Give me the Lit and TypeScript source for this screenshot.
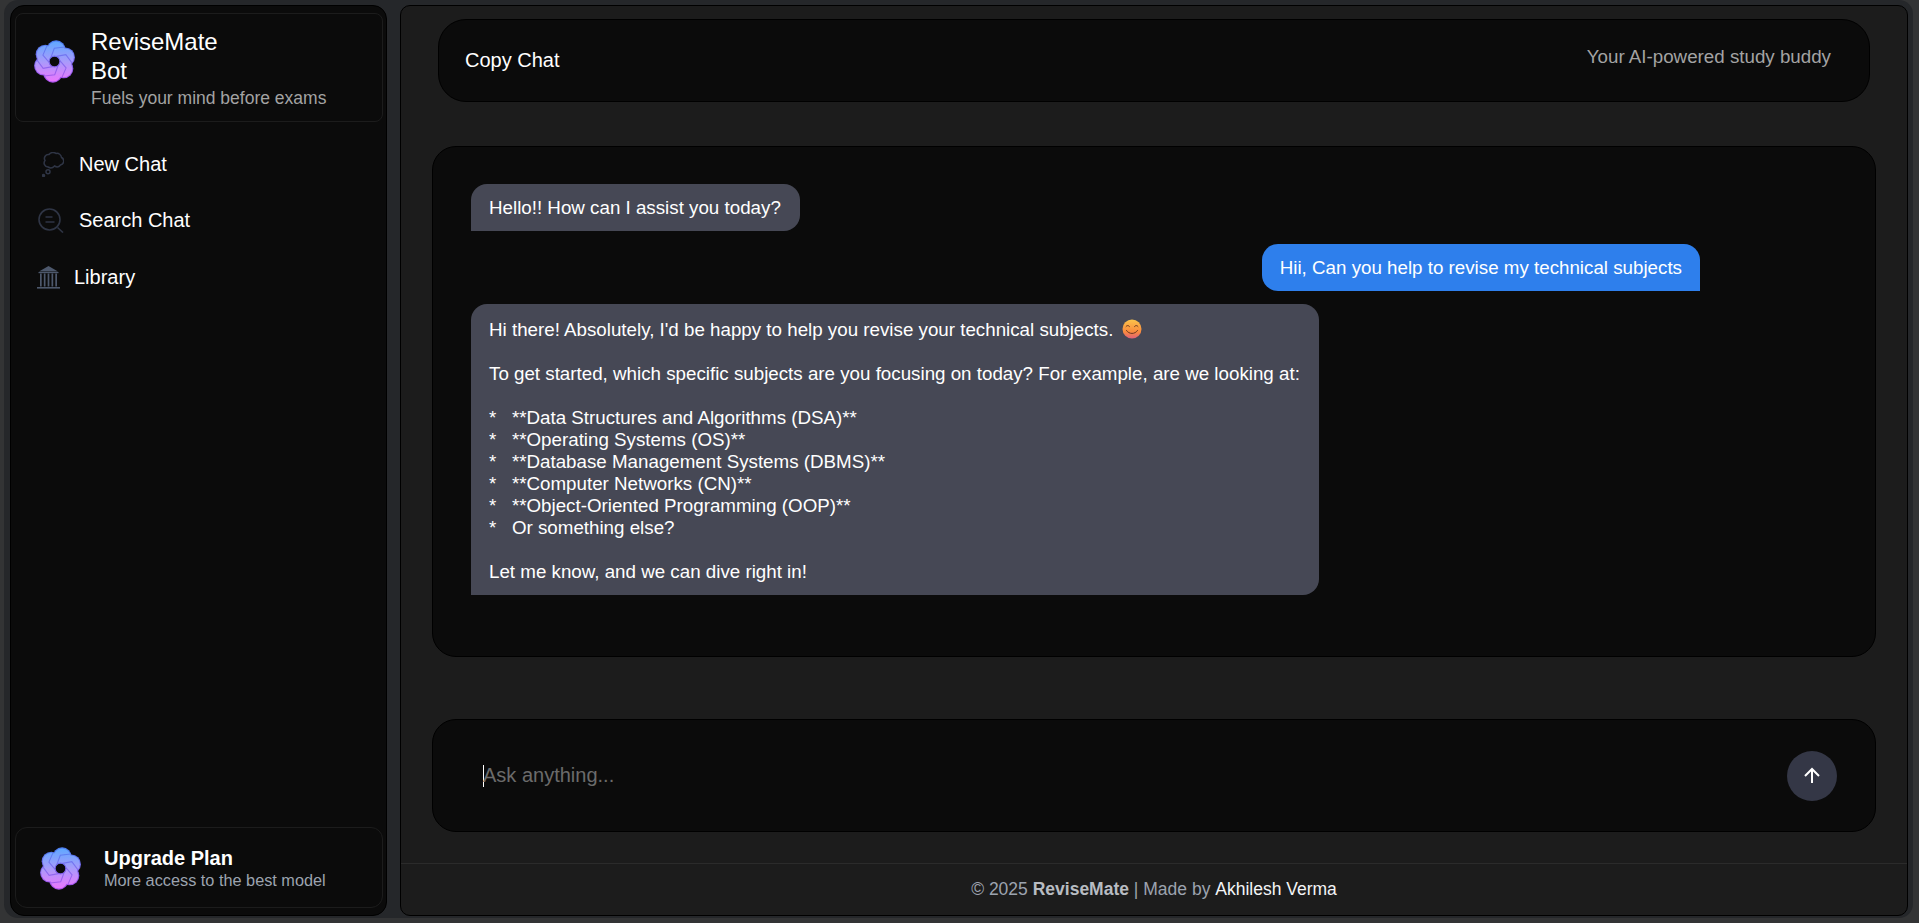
import { LitElement, html, css, svg } from "lit";
import { customElement } from "lit/decorators.js";

let uid = 0;
function logo(size: number) {
  const id = "lg" + uid++;
  const lobes = [0, 1, 2, 3, 4, 5].map((k) => {
    const a = ((-82 + k * 60) * Math.PI) / 180;
    return { x: 20 + 10.8 * Math.cos(a), y: 20 + 10.8 * Math.sin(a) };
  });
  const lines = [0, 1, 2, 3, 4, 5].map((k) => {
    const a = ((k * 60 - 10) * Math.PI) / 180;
    const c = Math.cos(a);
    const s = Math.sin(a);
    const pt = (x: number, y: number) => `${(20 + x * c - y * s).toFixed(2)} ${(20 + x * s + y * c).toFixed(2)}`;
    return `M${pt(2.6, -4.4)} L${pt(11.5, -4.4)} L${pt(15.9, 4.4)}`;
  });
  return html`<svg class="logo" width=${size} height=${size} viewBox="0 0 40 40" aria-hidden="true">
    <defs>
      <linearGradient id="${id}f" gradientUnits="userSpaceOnUse" x1="0" y1="2" x2="0" y2="38">
        <stop offset="0" stop-color="#62a8ff" />
        <stop offset="0.5" stop-color="#a89bfb" />
        <stop offset="1" stop-color="#e878fd" />
      </linearGradient>
      <linearGradient id="${id}s" gradientUnits="userSpaceOnUse" x1="0" y1="2" x2="0" y2="38">
        <stop offset="0" stop-color="#4d7df0" />
        <stop offset="1" stop-color="#a850ea" />
      </linearGradient>
    </defs>
    ${lobes.map((l) => svg`<circle cx=${l.x} cy=${l.y} r="9" fill="url(#${id}s)" />`)}
    ${lobes.map((l) => svg`<circle cx=${l.x} cy=${l.y} r="8" fill="url(#${id}f)" />`)}
    ${lines.map((d) => svg`<path d=${d} fill="none" stroke="url(#${id}s)" stroke-width="1" stroke-opacity="0.85" />`)}
    <circle cx="20" cy="20" r="5" fill="#0a0a0a" stroke="url(#${id}s)" stroke-width="1" />
  </svg>`;
}

@customElement("app-root")
export class AppRoot extends LitElement {
  static styles = css`
    :host {
      display: block;
      box-sizing: border-box;
      width: 100%;
      height: 923px;
      padding: 0 6px 5px 4px;
      background: #333435;
      font-family: "Liberation Sans", Arial, sans-serif;
      color: #fff;
      overflow: hidden;
    }
    * { box-sizing: border-box; }
    .shell {
      display: flex;
      height: 100%;
      padding: 5px 5px 2px 6px;
      gap: 13px;
      background: #25272a;
      border-radius: 14px;
    }
    .side {
      width: 377px;
      flex: none;
      background: #0b0b0b;
      border: 1px solid #000;
      border-radius: 14px;
      padding: 7px 3px 7px 4px;
      display: flex;
      flex-direction: column;
    }
    .brand {
      height: 109px;
      flex: none;
      border: 1px solid #1c1c1c;
      border-radius: 8px;
      display: flex;
      align-items: center;
      padding-left: 16.5px;
      gap: 15.5px;
    }
    .brand .logo { margin-top: -12px; }
    .brand-t { font-size: 24px; line-height: 29px; }
    .brand-s { font-size: 17.5px; line-height: 24px; color: #a3a3a3; margin-top: 1px; }
    .brand-copy { padding-top: 2px; }
    nav { display: flex; flex-direction: column; padding-top: 14px; flex: 1; }
    .item { display: flex; align-items: center; font-size: 20px; height: 56.5px; }
    .item svg { flex: none; }
    .i1 { padding-left: 27px; gap: 15px; }
    .i2 { padding-left: 23px; gap: 15px; }
    .i3 { padding-left: 22px; gap: 14px; }
    .up {
      height: 81px;
      flex: none;
      border: 1px solid #1c1c1c;
      border-radius: 12px;
      display: flex;
      align-items: center;
      padding-left: 22.5px;
      gap: 22.5px;
    }
    .up .logo { margin-top: 2px; }
    .up-t { font-size: 20px; font-weight: 700; line-height: 24px; }
    .up-s { font-size: 16.3px; line-height: 20px; color: #9ca3af; }
    main {
      flex: 1;
      background: #1c1c1c;
      border: 1px solid #000;
      border-radius: 10px;
      display: flex;
      flex-direction: column;
      padding: 13px 31px 0;
    }
    .top {
      margin: 0 6px;
      height: 83px;
      flex: none;
      background: #0b0b0b;
      border: 1px solid #000;
      border-radius: 28px;
      display: flex;
      justify-content: space-between;
      padding: 0 38px 0 26px;
    }
    .copy { font-size: 20px; line-height: 24px; padding-top: 28px; }
    .tag { font-size: 18.75px; line-height: 24px; padding-top: 25px; color: #a3a3a3; }
    .chat {
      margin-top: 44px;
      height: 511px;
      flex: none;
      background: #0b0b0b;
      border: 1px solid #000;
      border-radius: 24px;
      padding: 37px 38px;
      display: flex;
      flex-direction: column;
      gap: 13px;
    }
    .b {
      font-size: 18.75px;
      line-height: 22px;
      padding: 12.5px 18px;
      white-space: pre;
      width: fit-content;
    }
    .bot { background: #464855; border-radius: 16px 16px 16px 0; padding-right: 19px; }
    .me { background: #2e7fec; border-radius: 16px 16px 0 16px; align-self: flex-end; margin-right: 137px; }
    .emoji { display: inline-block; width: 20px; height: 22px; vertical-align: -3px; margin: 0 0 0 9px; }
    .input {
      margin-top: 62px;
      height: 113px;
      flex: none;
      background: #0b0b0b;
      border: 1px solid #000;
      border-radius: 24px;
      display: flex;
      align-items: center;
      justify-content: space-between;
      padding: 0 38px 0 50px;
    }
    .ph { display: flex; align-items: center; font-size: 20px; color: #6b6b6b; }
    .caret { width: 1px; height: 22px; background: #fff; margin-right: -1px; }
    .send {
      width: 50px;
      height: 50px;
      border-radius: 50%;
      border: 0;
      padding: 0;
      background: #343746;
      display: flex;
      align-items: center;
      justify-content: center;
    }
    footer {
      margin: 31px -31px 0;
      border-top: 1px solid #2b2b2b;
      flex: 1;
      display: flex;
      align-items: center;
      justify-content: center;
      font-size: 17.5px;
      color: #9ca3af;
    }
    footer b { color: #b8bcc2; }
    footer span { color: #f3f4f6; }
  `;

  render() {
    return html`
      <div class="shell">
        <aside class="side">
          <div class="brand">
            ${logo(43)}
            <div class="brand-copy">
              <div class="brand-t">ReviseMate<br />Bot</div>
              <div class="brand-s">Fuels your mind before exams</div>
            </div>
          </div>
          <nav>
            <div class="item i1">
              <svg width="22" height="25" viewBox="0 0 22 25" fill="none" stroke="#2f3545" stroke-width="1.5">
                <path d="M6 15a4 4 0 0 1-3-6.500 4 4 0 0 1 4-6 5 5 0 0 1 7-1 4.500 4.500 0 0 1 5.500 4 4 4 0 0 1-1 7.500 4.500 4.500 0 0 1-6 1 5 5 0 0 1-6.500 1z" />
                <circle cx="6" cy="19.700" r="2" />
                <circle cx="1.500" cy="23.500" r="1" fill="#2f3545" />
              </svg>
              New Chat
            </div>
            <div class="item i2">
              <svg width="26" height="25" viewBox="0 0 26 25" fill="none" stroke="#2f3545" stroke-width="1.6">
                <circle cx="11.500" cy="11.500" r="10.500" />
                <path d="M7.500 9h7M7.500 14h9" />
                <path d="M19.500 19.500l5.500 5" />
              </svg>
              Search Chat
            </div>
            <div class="item i3">
              <svg width="23" height="23" viewBox="0 0 23 23" fill="#4d586c">
                <path d="M11.500 0l9.500 5.500H2z" />
                <rect x="1.500" y="6" width="20" height="1.200" />
                <rect x="3" y="7.500" width="1.700" height="13" />
                <rect x="6.800" y="7.500" width="1.700" height="13" />
                <rect x="10.650" y="7.500" width="1.700" height="13" />
                <rect x="14.500" y="7.500" width="1.700" height="13" />
                <rect x="18.300" y="7.500" width="1.700" height="13" />
                <rect y="21" width="23" height="1.600" />
              </svg>
              Library
            </div>
          </nav>
          <div class="up">
            ${logo(43)}
            <div>
              <div class="up-t">Upgrade Plan</div>
              <div class="up-s">More access to the best model</div>
            </div>
          </div>
        </aside>
        <main>
          <div class="top">
            <div class="copy">Copy Chat</div>
            <div class="tag">Your AI-powered study buddy</div>
          </div>
          <section class="chat">
            <div class="b bot">Hello!! How can I assist you today?</div>
            <div class="b me">Hii, Can you help to revise my technical subjects</div>
            <div class="b bot">Hi there! Absolutely, I'd be happy to help you revise your technical subjects.<svg class="emoji" viewBox="0 0 20 22" aria-hidden="true">
                <defs>
                  <linearGradient id="em" x1="0" y1="0" x2="0" y2="1">
                    <stop offset="0" stop-color="#fcc44a" />
                    <stop offset="0.65" stop-color="#f98a3e" />
                    <stop offset="1" stop-color="#e0607a" />
                  </linearGradient>
                </defs>
                <circle cx="10" cy="12" r="9.500" fill="url(#em)" />
                <path d="M4 9.500c.9-1.300 2.600-1.300 3.500 0M12.500 9.500c.9-1.300 2.600-1.300 3.500 0M4.500 13.500c2.500 4 8.500 4 11 0" fill="none" stroke="#6a3520" stroke-width="1" stroke-linecap="round" />
              </svg>

To get started, which specific subjects are you focusing on today? For example, are we looking at:

*   **Data Structures and Algorithms (DSA)**
*   **Operating Systems (OS)**
*   **Database Management Systems (DBMS)**
*   **Computer Networks (CN)**
*   **Object-Oriented Programming (OOP)**
*   Or something else?

Let me know, and we can dive right in!</div>
          </section>
          <div class="input">
            <div class="ph"><i class="caret"></i>Ask anything...</div>
            <button class="send" aria-label="Send">
              <svg width="20" height="20" viewBox="0 0 20 20" fill="none" stroke="#fff" stroke-width="2">
                <path d="M10 17V3.500M3 10l7-7 7 7" />
              </svg>
            </button>
          </div>
          <footer>© 2025&nbsp;<b>ReviseMate</b>&nbsp;| Made by&nbsp;<span>Akhilesh Verma</span></footer>
        </main>
      </div>
    `;
  }
}
